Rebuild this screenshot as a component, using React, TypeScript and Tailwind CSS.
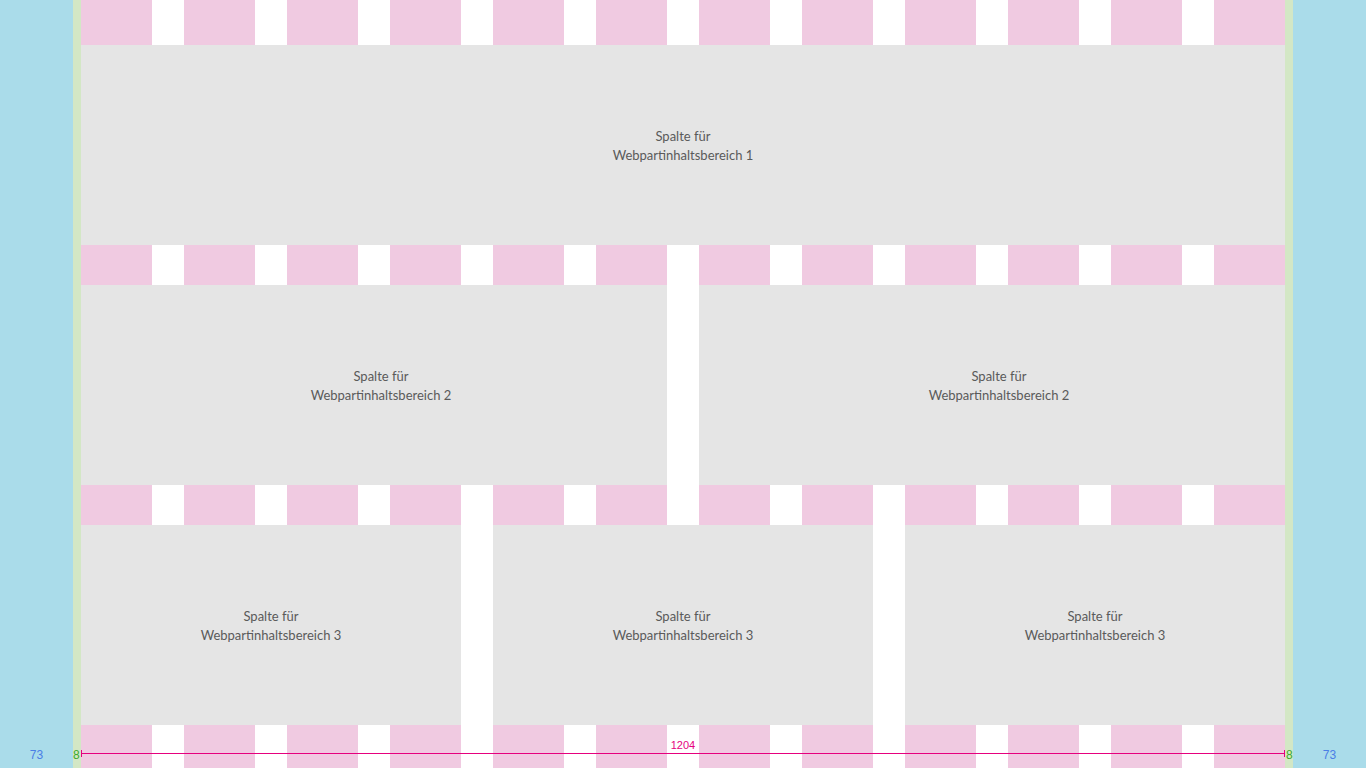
import React from "react";

const cols = Array.from({ length: 12 });

function Cell({ label, shift }: { label: string; shift?: boolean }) {
  return (
    <div
      className={`flex h-[200px] flex-1 items-center justify-center bg-[#e5e5e5] pt-[2px] text-center text-[13px] leading-[19px] text-[#5a5a5a] ${
        shift ? "pl-[14px]" : ""
      }`}
    >
      <p>
        Spalte für
        <br />
        {label}
      </p>
    </div>
  );
}

export default function App() {
  return (
    <div
      className="flex h-[768px] w-[1366px] overflow-hidden bg-white"
      style={{ fontFamily: 'Lato, "Liberation Sans", sans-serif' }}
    >
      <div className="relative w-[73px] shrink-0 bg-[#aadcea]">
        <span className="absolute bottom-[7px] left-0 right-0 text-center font-['Liberation_Sans',sans-serif] text-[12px] leading-none text-[#4a7fe6]">73</span>
      </div>
      <div className="relative w-[8px] shrink-0 bg-[#d3e7c5]">
        <span className="absolute bottom-[7px] left-0 font-['Liberation_Sans',sans-serif] text-[12px] leading-none text-[#3caa2e]">8</span>
      </div>

      <div className="relative w-[1204px] shrink-0">
        {/* column grid behind the sections */}
        <div className="absolute inset-0 flex gap-[32px]">
          {cols.map((_, i) => (
            <div key={i} className="h-full flex-1 bg-[#f0cae1]" />
          ))}
        </div>

        <div className="relative flex flex-col gap-[40px] pt-[45px]">
          <div className="flex">
            <Cell label="Webpartinhaltsbereich 1" />
          </div>
          <div className="flex gap-[32px]">
            <Cell label="Webpartinhaltsbereich 2" shift />
            <Cell label="Webpartinhaltsbereich 2" shift />
          </div>
          <div className="flex gap-[32px]">
            <Cell label="Webpartinhaltsbereich 3" />
            <Cell label="Webpartinhaltsbereich 3" />
            <Cell label="Webpartinhaltsbereich 3" />
          </div>
        </div>

        {/* width measure */}
        <div className="absolute bottom-[14px] left-0 right-0 h-px bg-[#e6007e]" />
        <div className="absolute bottom-[11px] left-0 h-[7px] w-px bg-[#e6007e]" />
        <div className="absolute bottom-[11px] right-0 h-[7px] w-px bg-[#e6007e]" />
        <span className="absolute bottom-[17px] left-0 right-0 text-center font-['Liberation_Sans',sans-serif] text-[11px] leading-none text-[#e6007e]">
          1204
        </span>
      </div>

      <div className="relative w-[8px] shrink-0 bg-[#d3e7c5]">
        <span className="absolute bottom-[7px] left-[1px] font-['Liberation_Sans',sans-serif] text-[12px] leading-none text-[#3caa2e]">8</span>
      </div>
      <div className="relative w-[73px] shrink-0 bg-[#aadcea]">
        <span className="absolute bottom-[7px] left-0 right-0 text-center font-['Liberation_Sans',sans-serif] text-[12px] leading-none text-[#4a7fe6]">73</span>
      </div>
    </div>
  );
}
